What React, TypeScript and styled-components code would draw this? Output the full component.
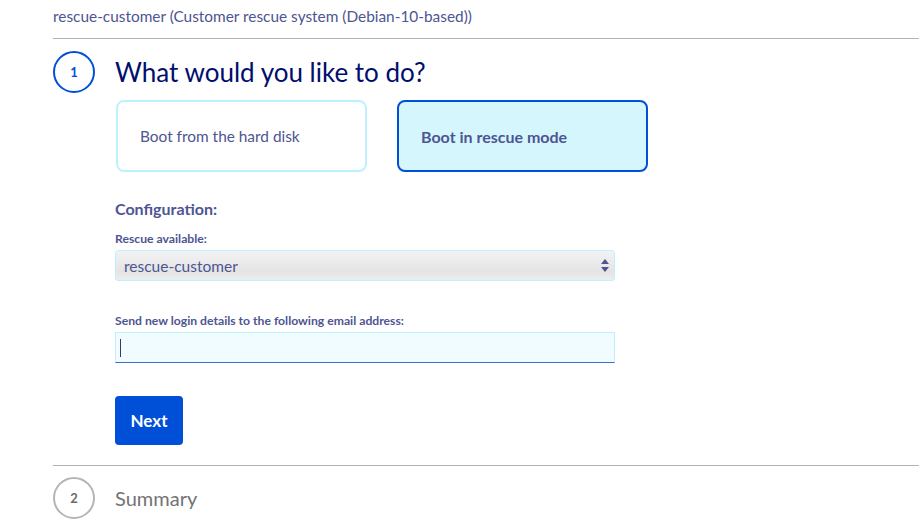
import * as React from "react"
import styled, { createGlobalStyle } from "styled-components"

const GlobalStyle = createGlobalStyle`
    html, body {
        margin: 0;
        padding: 0;
        background: #fff;
    }
    body {
        font-family: Lato, "Open Sans", sans-serif;
        color: #4d5592;
    }
`

const steps = [
    { id: 1, title: "What would you like to do?" },
    { id: 2, title: "Summary" },
]

const App = () => {
    const [mode, setMode] = React.useState<"disk" | "rescue">("rescue")

    return (
        <>
            <GlobalStyle />
            <Page>
                <Current>rescue-customer (Customer rescue system (Debian-10-based))</Current>

                <Step>
                    <Badge $active>{steps[0].id}</Badge>
                    <Body>
                        <Heading $active>{steps[0].title}</Heading>
                        <Choices>
                            <Choice $selected={mode === "disk"} onClick={() => setMode("disk")}>
                                Boot from the hard disk
                            </Choice>
                            <Choice $selected={mode === "rescue"} onClick={() => setMode("rescue")}>
                                Boot in rescue mode
                            </Choice>
                        </Choices>

                        <Section>Configuration:</Section>

                        <Field>
                            <Label>Rescue available:</Label>
                            <SelectBox>
                                <span>rescue-customer</span>
                                <svg width="8" height="13" viewBox="0 0 8 13">
                                    <path d="M4 0 L8 5 H0 Z" fill="#4d5592" />
                                    <path d="M4 13 L8 8 H0 Z" fill="#4d5592" />
                                </svg>
                            </SelectBox>
                        </Field>

                        <Field $top={32}>
                            <Label>Send new login details to the following email address:</Label>
                            <TextInput>
                                <Caret />
                            </TextInput>
                        </Field>

                        <NextButton>Next</NextButton>
                    </Body>
                </Step>

                <Step $last>
                    <Badge>{steps[1].id}</Badge>
                    <Body>
                        <Heading>{steps[1].title}</Heading>
                    </Body>
                </Step>
            </Page>
        </>
    )
}
export default App

const Page = styled.div`
    padding-left: 53px;
    width: 866px;
`

const Current = styled.div`
    font-size: 15.4px;
    line-height: 20px;
    padding: 6px 0 12px;
    color: #4d5592;
`

const Step = styled.div<{ $last?: boolean }>`
    display: grid;
    grid-template-columns: 42px 1fr;
    column-gap: 20px;
    border-top: 1px solid #b3b3b3;
    padding: ${p => (p.$last ? "11px 0 0" : "12px 0 20px")};
`

const Badge = styled.div<{ $active?: boolean }>`
    width: 42px;
    height: 42px;
    box-sizing: border-box;
    border-radius: 50%;
    border: 2px solid ${p => (p.$active ? "#0050d7" : "#b5b5b5")};
    color: ${p => (p.$active ? "#0050d7" : "#6b6b6b")};
    display: flex;
    align-items: center;
    justify-content: center;
    font-size: 13px;
    font-weight: 700;
`

const Body = styled.div`
    display: flex;
    flex-direction: column;
    align-items: flex-start;
`

const Heading = styled.h2<{ $active?: boolean }>`
    margin: 0;
    height: 42px;
    display: flex;
    align-items: center;
    font-weight: 400;
    font-size: ${p => (p.$active ? "26px" : "20px")};
    color: ${p => (p.$active ? "#000e6e" : "#737373")};
`

const Choices = styled.div`
    display: flex;
    gap: 30px;
    margin-top: 7px;
    padding-left: 1px;
`

const Choice = styled.div<{ $selected?: boolean }>`
    width: 251px;
    height: 72px;
    box-sizing: border-box;
    border-radius: 8px;
    border: 2px solid ${p => (p.$selected ? "#0050d7" : "#bef1ff")};
    background: ${p => (p.$selected ? "#d6f6fe" : "#fff")};
    display: flex;
    align-items: center;
    padding-left: 22px;
    font-size: ${p => (p.$selected ? "16px" : "15.4px")};
    font-weight: ${p => (p.$selected ? 700 : 400)};
    color: #4d5592;
    cursor: pointer;
`

const Section = styled.div`
    margin-top: 27px;
    font-size: 16px;
    font-weight: 700;
    line-height: 20px;
`

const Field = styled.div<{ $top?: number }>`
    display: flex;
    flex-direction: column;
    margin-top: ${p => p.$top ?? 12}px;
    width: 500px;
`

const Label = styled.div`
    font-size: 12.2px;
    font-weight: 700;
    line-height: 16px;
    margin-bottom: 3px;
`

const SelectBox = styled.div`
    height: 31px;
    box-sizing: border-box;
    border: 1px solid #bef1ff;
    border-radius: 3px;
    background: linear-gradient(#f3f3f3, #e4e4e4 70%, #ededed);
    display: flex;
    align-items: center;
    justify-content: space-between;
    padding: 0 5px 0 8px;
    font-size: 15.5px;
    color: #4d5592;
`

const TextInput = styled.div`
    height: 31px;
    box-sizing: border-box;
    border: 1px solid #bef1ff;
    border-bottom: 1px solid #3f70c9;
    background: #f0fcff;
    display: flex;
    align-items: center;
    padding-left: 4px;
`

const Caret = styled.span`
    width: 1px;
    height: 18px;
    background: #333a70;
`

const NextButton = styled.button`
    margin-top: 33px;
    width: 68px;
    height: 49px;
    border: none;
    border-radius: 4px;
    background: #0050d7;
    color: #fff;
    font-family: inherit;
    font-size: 17px;
    font-weight: 700;
    cursor: pointer;
`
